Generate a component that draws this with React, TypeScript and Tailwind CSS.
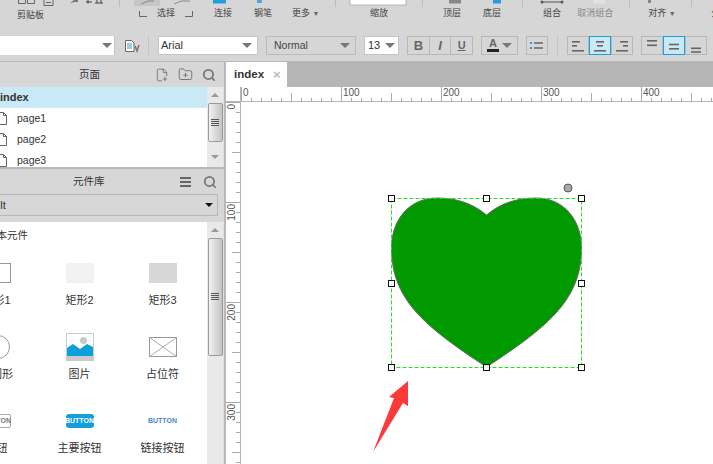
import React from 'react';
import { FilePlus2, FolderPlus, Search } from 'lucide-react';

const Caret = () => (
  <span className="w-0 h-0 border-x-[5px] border-x-transparent border-t-[5px] border-t-[#777]" />
);

// cropped icons along the top edge of the ribbon
const RibbonCrop = () => (
  <svg width="713" height="7" viewBox="0 0 713 7" className="block shrink-0">
    <path d="M18.5 0v3.5h7V0M27.5 0v3.5h7V0" fill="none" stroke="#666" />
    <path d="M44 0v5.5h9V0M46 2.5h5" fill="none" stroke="#666" />
    <path d="M70 3.5 L74 0 H78 V2 H74 Z" fill="#777" />
    <path d="M86 2h6M88 0v3.5M95 3h8M97 0v3M101 0v3" stroke="#444" />
    <path d="M119.5 0v7M335.5 0v7M422.5 0v7M522.5 0v7M629.5 0v7M691.5 0v7" stroke="#bdbdbd" />
    <rect x="134" y="0" width="26" height="6" fill="#c6c6c6" />
    <path d="M141 4 L148 1 H154 M174 4 L181 1 H190" fill="none" stroke="#888" />
    <rect x="213" y="0" width="13" height="3.5" fill="#1ea0dc" />
    <rect x="257" y="0" width="5" height="3" fill="#4aa8dc" />
    <rect x="350" y="-1" width="56" height="6" fill="#fff" stroke="#b5b5b5" />
    <rect x="449" y="0" width="12" height="3.5" fill="#888" />
    <rect x="493" y="0" width="8" height="3.5" fill="#1ea0dc" />
    <path d="M541 2h22" stroke="#555" />
    <circle cx="542" cy="2" r="1.5" fill="#555" />
    <circle cx="562" cy="2" r="1.5" fill="#555" />
    <rect x="593" y="0" width="12" height="3.5" fill="#e2e2e2" />
    <rect x="648" y="0" width="3" height="3" fill="#888" />
  </svg>
);

const Bracket = ({ flip }: { flip?: boolean }) => (
  <svg width="8" height="6" viewBox="0 0 8 6" className="shrink-0 mt-[1px]">
    <path d={flip ? 'M0 5.5h7.5V0' : 'M.5 0v5.5H8'} fill="none" stroke="#666" />
  </svg>
);

const RibbonLabels = () => (
  <div className="flex items-center h-[13px] text-[9px] leading-none text-[#444] whitespace-nowrap">
    <span className="ml-[17px] mt-[3px] shrink-0">剪贴板</span>
    <span className="ml-[95px]"><Bracket /></span>
    <span className="ml-[10px] shrink-0">选择</span>
    <span className="ml-[10px]"><Bracket flip /></span>
    <span className="ml-[21px] shrink-0">连接</span>
    <span className="ml-[22px] shrink-0">钢笔</span>
    <span className="ml-[20px] w-[26px] shrink-0">更多 <span className="text-[7px] text-[#666]">▼</span></span>
    <span className="ml-[52px] shrink-0">缩放</span>
    <span className="ml-[55px] shrink-0">顶层</span>
    <span className="ml-[22px] shrink-0">底层</span>
    <span className="ml-[42px] shrink-0">组合</span>
    <span className="ml-[16px] shrink-0 text-[#888]">取消组合</span>
    <span className="ml-[35px] w-[26px] shrink-0">对齐 <span className="text-[7px] text-[#666]">▼</span></span>
    <span className="ml-[37px] shrink-0">分</span>
  </div>
);

const AlignIcon = ({ bars }: { bars: number[][] }) => (
  <svg width="14" height="14" viewBox="0 0 14 14">
    {bars.map((b, i) => (
      <rect key={i} x={b[0]} y={b[1]} width={b[2]} height="1.6" fill="#666" />
    ))}
  </svg>
);

const FormatBar = () => (
  <div className="flex items-center h-[33px] pb-[6px] pt-[8px] text-[11px] text-[#333]">
    <div className="w-[115px] h-[19px] bg-white flex items-center justify-end pr-[2px] shrink-0 border-r border-[#c4c4c4]">
      <Caret />
    </div>
    <svg width="16" height="14" viewBox="0 0 16 14" className="ml-[9px] shrink-0">
      <path d="M1.5 1.5h6l2.5 2.5v8.5H1.5z" fill="#fff" stroke="#666" />
      <path d="M3 5h5M3 7h5M3 9h5" stroke="#3a9bd0" />
      <path d="M11 7l2 5 2-6" fill="none" stroke="#777" strokeWidth="1.5" />
    </svg>
    <div className="w-px h-[19px] bg-[#c4c4c4] ml-[8px] shrink-0" />
    <div className="ml-[9px] w-[100px] h-[19px] bg-white border border-[#c4c4c4] flex items-center justify-between pl-[2px] pr-[5px] shrink-0">
      <span>Arial</span>
      <Caret />
    </div>
    <div className="ml-[8px] w-[90px] h-[19px] border border-[#bbb] flex items-center justify-between pl-[7px] pr-[5px] shrink-0 text-[10.5px] text-[#444]">
      <span>Normal</span>
      <Caret />
    </div>
    <div className="ml-[8px] w-[35px] h-[19px] bg-white border border-[#c4c4c4] flex items-center justify-between pl-[3px] pr-[3px] shrink-0">
      <span>13</span>
      <Caret />
    </div>
    <div className="ml-[8px] flex h-[19px] w-[66px] border border-[#b8b8b8] shrink-0 text-[#666] text-[13px]">
      <span className="flex-1 flex items-center justify-center font-bold border-r border-[#b8b8b8]">B</span>
      <span className="flex-1 flex items-center justify-center font-bold italic border-r border-[#b8b8b8]">I</span>
      <span className="flex-1 flex items-center justify-center font-bold underline text-[11px]">U</span>
    </div>
    <div className="ml-[8px] flex items-center h-[19px] w-[37px] border border-[#b8b8b8] shrink-0 pl-[5px] pr-[5px] justify-between">
      <span className="flex flex-col items-center w-[12px] text-[11px] leading-[9px] font-bold text-[#666]">
        A
        <span className="w-[12px] h-[3px] bg-[#222] mt-[1px]" />
      </span>
      <Caret />
    </div>
    <div className="ml-[8px] flex items-center justify-center h-[19px] w-[22px] border border-[#b8b8b8] shrink-0">
      <svg width="14" height="10" viewBox="0 0 14 10">
        <path d="M0 2h2M0 7h2" stroke="#1ea0dc" strokeWidth="2" />
        <path d="M4 2h9M4 7h9" stroke="#666" strokeWidth="1.6" />
      </svg>
    </div>
    <div className="w-px h-[19px] bg-[#c4c4c4] ml-[9px] shrink-0" />
    <div className="ml-[9px] flex h-[19px] w-[66px] shrink-0">
      <span className="w-[22px] flex items-center justify-center border border-[#b8b8b8]">
        <AlignIcon bars={[[1, 2, 8], [1, 6, 5], [1, 11, 12]]} />
      </span>
      <span className="w-[22px] flex items-center justify-center border border-[#1ea0dc] bg-[#cae9f7]">
        <AlignIcon bars={[[3, 2, 8], [4, 6, 6], [1, 11, 12]]} />
      </span>
      <span className="w-[22px] flex items-center justify-center border border-[#b8b8b8]">
        <AlignIcon bars={[[5, 2, 8], [8, 6, 5], [1, 11, 12]]} />
      </span>
    </div>
    <div className="ml-[8px] flex h-[19px] w-[66px] shrink-0">
      <span className="w-[22px] flex items-center justify-center border border-[#b8b8b8]">
        <AlignIcon bars={[[2, 1, 10], [2, 5.5, 10]]} />
      </span>
      <span className="w-[22px] flex items-center justify-center border border-[#1ea0dc] bg-[#cae9f7]">
        <AlignIcon bars={[[2, 4.7, 10], [2, 9, 10]]} />
      </span>
      <span className="w-[22px] flex items-center justify-center border border-[#b8b8b8]">
        <AlignIcon bars={[[2, 8.5, 10], [2, 12.2, 10]]} />
      </span>
    </div>
  </div>
);

const PageIcon = () => (
  <svg width="11" height="13" viewBox="0 0 11 13" className="shrink-0 -ml-[4px]">
    <path d="M.5.5h7l3 3v9H.5z" fill="#fff" stroke="#666" />
    <path d="M7.5.5v3h3" fill="none" stroke="#666" />
  </svg>
);

const Scrollbar = ({ kind }: { kind: 'pages' | 'widgets' }) => (
  <div className="w-[17px] shrink-0 bg-[#e9e9e9] flex flex-col items-center border-r border-[#e0e0e0]">
    <span className="mt-[6px] w-0 h-0 border-x-[4px] border-x-transparent border-b-[4px] border-b-[#999]" />
    <div
      className={`mt-[6px] w-[15px] rounded-[2px] border border-[#9a9a9a] bg-gradient-to-r from-[#f2f2f2] to-[#c4c4c4] flex items-center justify-center ${
        kind === 'pages' ? 'h-[39px]' : 'h-[118px]'
      }`}
    >
      <svg width="8" height="8" viewBox="0 0 8 8">
        <path d="M0 .5h8M0 2.5h8M0 4.5h8M0 6.5h8" stroke="#555" />
      </svg>
    </div>
    {kind === 'pages' && (
      <span className="mt-[13px] w-0 h-0 border-x-[4px] border-x-transparent border-t-[4px] border-t-[#999]" />
    )}
  </div>
);

const PagesPanel = () => (
  <>
    <div className="h-[25px] bg-[#d7d7d7] relative flex items-center text-[10.5px] text-[#333]">
      <span className="ml-[79px]">页面</span>
      <FilePlus2 size={14} strokeWidth={1.6} className="ml-[55px] text-[#777]" />
      <FolderPlus size={15} strokeWidth={1.6} className="ml-[9px] text-[#777]" />
      <Search size={14} strokeWidth={3} className="ml-[9px] text-[#777]" />
    </div>
    <div className="h-[80px] flex overflow-hidden bg-white text-[10.5px] text-[#333]">
      <div className="flex-1 min-w-0">
        <div className="h-[21px] bg-[#cae9f7] flex items-center font-bold text-[11px]">index</div>
        {['page1', 'page2', 'page3'].map((p) => (
          <div key={p} className="h-[21px] flex items-center">
            <PageIcon />
            <span className="ml-[10px]">{p}</span>
          </div>
        ))}
      </div>
      <Scrollbar kind="pages" />
    </div>
  </>
);

type Widget = { label: string; icon: React.ReactNode };

const widgets: Widget[] = [
  { label: '矩形1', icon: <div className="w-[28px] h-[20px] bg-white border border-[#999]" /> },
  { label: '矩形2', icon: <div className="w-[28px] h-[20px] bg-[#f2f2f2]" /> },
  { label: '矩形3', icon: <div className="w-[28px] h-[20px] bg-[#d7d7d7]" /> },
  { label: '椭圆形', icon: <div className="w-[26px] h-[24px] rounded-full border border-[#999]" /> },
  {
    label: '图片',
    icon: (
      <svg width="28" height="28" viewBox="0 0 28 28">
        <rect x=".5" y=".5" width="27" height="27" fill="#fff" stroke="#ccc" />
        <rect x="1" y="23" width="26" height="5" fill="#cdcbc9" />
        <path d="M1 23V15l6-4 7 5 7-5 6 3v9z" fill="#0d9fdc" />
        <circle cx="17.5" cy="7.5" r="3.5" fill="#c9c9c9" />
      </svg>
    ),
  },
  {
    label: '占位符',
    icon: (
      <svg width="28" height="20" viewBox="0 0 28 20">
        <rect x=".5" y=".5" width="27" height="19" fill="#fff" stroke="#999" />
        <path d="M.5.5l27 19M27.5.5l-27 19" stroke="#aaa" />
      </svg>
    ),
  },
  {
    label: '按钮',
    icon: (
      <div className="w-[28px] h-[14px] bg-white rounded-[2px] border border-[#aaa] flex items-center justify-center text-[7px] font-bold text-[#777]">
        BUTTON
      </div>
    ),
  },
  {
    label: '主要按钮',
    icon: (
      <div className="w-[28px] h-[14px] rounded-[3px] bg-[#139fdd] flex items-center justify-center text-[7px] font-bold text-white">
        BUTTON
      </div>
    ),
  },
  {
    label: '链接按钮',
    icon: <div className="text-[7px] font-bold text-[#4a86c8]">BUTTON</div>,
  },
];

const WidgetsPanel = () => (
  <>
    <div className="h-[25px] bg-[#d7d7d7] flex items-center text-[10.5px] text-[#333]">
      <span className="ml-[73px]">元件库</span>
      <svg width="11" height="10" viewBox="0 0 11 10" className="ml-[75px]">
        <path d="M0 1h11M0 5h11M0 9h11" stroke="#666" strokeWidth="2" />
      </svg>
      <Search size={14} strokeWidth={3} className="ml-[12px] text-[#777]" />
    </div>
    <div className="h-[28px] bg-[#d7d7d7] pr-[6px]">
      <div className="h-[22px] border border-[#b8b8b8] border-l-0 flex items-center justify-between pr-[4px] text-[11px] text-[#333] overflow-hidden">
        <span className="-ml-[29px]">Default</span>
        <span className="w-0 h-0 border-x-[4px] border-x-transparent border-t-[4px] border-t-[#111]" />
      </div>
    </div>
    <div className="flex-1 min-h-0 flex bg-white overflow-hidden text-[#333]">
      <div className="w-[207px] shrink-0 overflow-hidden">
        <div className="h-[26px] flex items-center text-[10.5px] -ml-[14px] mt-[1px] whitespace-nowrap">基本元件</div>
        <div className="grid grid-cols-[83px_83px_83px] -ml-[45px] mt-[10px]">
          {widgets.map((w) => (
            <div key={w.label} className="flex flex-col items-center h-[74px]">
              <div className="h-[28px] flex items-center justify-center">{w.icon}</div>
              <div className="mt-[5px] h-[16px] flex items-center text-[11px] whitespace-nowrap">{w.label}</div>
            </div>
          ))}
        </div>
      </div>
      <Scrollbar kind="widgets" />
    </div>
  </>
);

const range = (n: number) => Array.from({ length: n }, (_, i) => i);

const TopRuler = () => (
  <div className="flex h-[15px] bg-white shrink-0 border-b border-[#b5b5b5]">
    <div className="w-[15px] shrink-0 border-r border-[#b5b5b5]" />
    <svg width="472" height="14" viewBox="0 0 472 14" className="block shrink-0">
      {range(48).map((i) => (
        <line
          key={i}
          x1={i * 10 + 0.5}
          x2={i * 10 + 0.5}
          y1={i % 10 === 0 ? 0 : i % 5 === 0 ? 6 : 11}
          y2="14"
          stroke="#aaa"
        />
      ))}
      {[0, 100, 200, 300, 400].map((v) => (
        <text key={v} x={v + 2} y="9" fontSize="10" fill="#555">{v}</text>
      ))}
    </svg>
  </div>
);

const LeftRuler = () => (
  <div className="w-[15px] shrink-0 bg-white border-r border-[#b5b5b5]">
    <svg width="14" height="362" viewBox="0 0 14 362" className="block">
      {range(37).map((i) => (
        <line
          key={i}
          y1={i * 10 + 0.5}
          y2={i * 10 + 0.5}
          x1={i % 10 === 0 ? 0 : i % 5 === 0 ? 6 : 10}
          x2="14"
          stroke="#aaa"
        />
      ))}
      {[0, 100, 200, 300].map((v) => (
        <text
          key={v}
          transform={`translate(9 ${v + 2}) rotate(-90)`}
          textAnchor="end"
          fontSize="10"
          fill="#555"
        >
          {v}
        </text>
      ))}
    </svg>
  </div>
);

const handles = [
  [391.5, 198], [486.5, 198], [581.5, 198],
  [391.5, 283], [581.5, 283],
  [391.5, 367], [486.5, 367], [581.5, 367],
];

const Canvas = () => (
  <div className="relative flex-1 bg-white overflow-hidden">
    <svg width="472" height="362" viewBox="241 102 472 362" className="absolute left-0 top-0">
      <path
        d="M486.5 215 C472 203 456 198 437 198 C409 198 391.5 220 391.5 248 C391.5 298 422 325 486.5 367 C551 325 581.5 298 581.5 248 C581.5 220 564 198 536 198 C517 198 501 203 486.5 215 Z"
        fill="#009900"
        stroke="#666"
        strokeWidth="1"
      />
      <rect x="391.5" y="198.5" width="190" height="169" fill="none" stroke="#22e022" strokeDasharray="4 2" />
      {handles.map(([x, y]) => (
        <rect key={`${x}-${y}`} x={x - 3} y={y - 2.5} width="6" height="6" fill="#fff" fillOpacity="0.85" stroke="#111" />
      ))}
      <circle cx="568" cy="188" r="4" fill="#aaa" stroke="#555" />
      <path d="M373 452 L394 398 L389 397 L408 381 L408 406 L403 403 Z" fill="#fb3a3c" />
    </svg>
  </div>
);

export default function App() {
  return (
    <div className="w-[713px] h-[464px] overflow-hidden flex flex-col bg-[#d6d6d6] font-['Liberation_Sans','Noto_Sans_CJK_SC',sans-serif]">
      <div className="h-[28px] shrink-0 overflow-hidden">
        <RibbonCrop />
        <RibbonLabels />
      </div>
      <FormatBar />
      <div className="h-px bg-[#b8b8b8] shrink-0" />
      <div className="flex-1 min-h-0 flex">
        <div className="w-[224px] shrink-0 flex flex-col">
          <PagesPanel />
          <div className="h-[2px] bg-[#b8b8b8] shrink-0" />
          <WidgetsPanel />
        </div>
        <div className="w-[2px] bg-[#b8b8b8] shrink-0" />
        <div className="flex-1 min-w-0 flex flex-col">
          <div className="h-[25px] bg-[#b6b6b6] flex shrink-0">
            <div className="w-[61px] bg-white flex items-center pl-[8px] text-[11.5px] font-bold text-[#333]">
              index
              <span className="ml-[9px] text-[13px] text-[#bbb]">×</span>
            </div>
          </div>
          <TopRuler />
          <div className="flex-1 min-h-0 flex">
            <LeftRuler />
            <Canvas />
          </div>
        </div>
      </div>
    </div>
  );
}
